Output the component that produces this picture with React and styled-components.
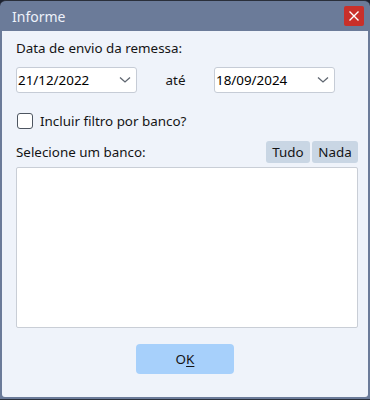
import React from "react";
import styled, { createGlobalStyle } from "styled-components";

const Global = createGlobalStyle`
  html, body { margin: 0; padding: 0; background: #1c2230; }
  body { font-family: "Noto Sans", "Open Sans", sans-serif; }
`;

const Window = styled.div`
  width: 370px;
  height: 400px;
  box-sizing: border-box;
  display: flex;
  flex-direction: column;
  background: #6b7b99;
  border-top: 1px solid #2a2f3a;
  border-bottom: 1px solid #2a2f3a;
  border-radius: 6px 6px 0 0;
  padding: 0 2px 2px 2px;
`;

const TitleBar = styled.div`
  height: 30px;
  flex: none;
  display: flex;
  align-items: center;
  justify-content: space-between;
  padding: 0 4px 0 10px;
`;

const Title = styled.span`
  color: #eef2fa;
  font-size: 14px;
`;

const CloseButton = styled.div`
  width: 20px;
  height: 20px;
  background: #c9302a;
  border-radius: 2px;
  display: flex;
  align-items: center;
  justify-content: center;
`;

const Body = styled.div`
  flex: 1;
  background: #eff3fa;
  border-radius: 0 0 3px 3px;
  padding: 8px 8px 0 14px;
  display: flex;
  flex-direction: column;
  color: #141414;
  font-size: 13.4px;
`;

const Label = styled.div`
  line-height: 18px;
`;

const DateRow = styled.div`
  display: flex;
  align-items: center;
  margin-top: 10px;
`;

const DateBox = styled.div`
  width: 121px;
  height: 26px;
  box-sizing: border-box;
  background: #fff;
  border: 1px solid #c6ccd6;
  border-radius: 3px;
  display: flex;
  align-items: center;
  justify-content: space-between;
  padding: 0 5px 0 1px;
  font-size: 13.4px;
  color: #000;
`;

const Between = styled.span`
  width: 77px;
  text-align: center;
`;

const CheckRow = styled.label`
  display: flex;
  align-items: center;
  gap: 7px;
  margin-top: 19px;
  margin-left: 1px;
`;

const Box = styled.span`
  width: 16px;
  height: 16px;
  box-sizing: border-box;
  border: 1px solid #4d5560;
  border-radius: 3px;
  background: #fff;
`;

const ListHeader = styled.div`
  display: flex;
  align-items: center;
  justify-content: space-between;
  margin-top: 11px;
  margin-right: 2px;
`;

const SmallButtons = styled.div`
  display: flex;
  gap: 2px;
`;

const SmallButton = styled.div`
  width: ${(p) => p.w}px;
  height: 22px;
  background: #c9d6e4;
  border-radius: 3px;
  display: flex;
  align-items: center;
  justify-content: center;
  font-size: 13.4px;
`;

const ListBox = styled.div`
  height: 161px;
  margin-top: 4px;
  margin-right: 2px;
  box-sizing: border-box;
  background: #fff;
  border: 1px solid #c9ced6;
  border-radius: 2px;
`;

const Footer = styled.div`
  display: flex;
  justify-content: center;
  margin-top: 16px;
  padding-right: 6px;
`;

const OkButton = styled.div`
  width: 98px;
  height: 30px;
  background: #a7d0fb;
  border-radius: 4px;
  display: flex;
  align-items: center;
  justify-content: center;
  font-size: 13.4px;
  & u { text-underline-offset: 2px; }
`;

const Chevron = () => (
  <svg width="12" height="8" viewBox="0 0 12 8">
    <path d="M1 1.5 L6 6 L11 1.5" fill="none" stroke="#5f6670" strokeWidth="1.3" />
  </svg>
);

const DateField = ({ value }) => (
  <DateBox>
    <span>{value}</span>
    <Chevron />
  </DateBox>
);

export default function App() {
  return (
    <>
      <Global />
      <Window>
        <TitleBar>
          <Title>Informe</Title>
          <CloseButton>
            <svg width="12" height="12" viewBox="0 0 12 12">
              <path d="M1.5 1.5 L10.5 10.5 M10.5 1.5 L1.5 10.5" stroke="#fff" strokeWidth="1.4" />
            </svg>
          </CloseButton>
        </TitleBar>
        <Body>
          <Label>Data de envio da remessa:</Label>
          <DateRow>
            <DateField value="21/12/2022" />
            <Between>até</Between>
            <DateField value="18/09/2024" />
          </DateRow>
          <CheckRow>
            <Box />
            <span>Incluir filtro por banco?</span>
          </CheckRow>
          <ListHeader>
            <Label>Selecione um banco:</Label>
            <SmallButtons>
              <SmallButton w={44}>Tudo</SmallButton>
              <SmallButton w={46}>Nada</SmallButton>
            </SmallButtons>
          </ListHeader>
          <ListBox />
          <Footer>
            <OkButton>
              O<u>K</u>
            </OkButton>
          </Footer>
        </Body>
      </Window>
    </>
  );
}
